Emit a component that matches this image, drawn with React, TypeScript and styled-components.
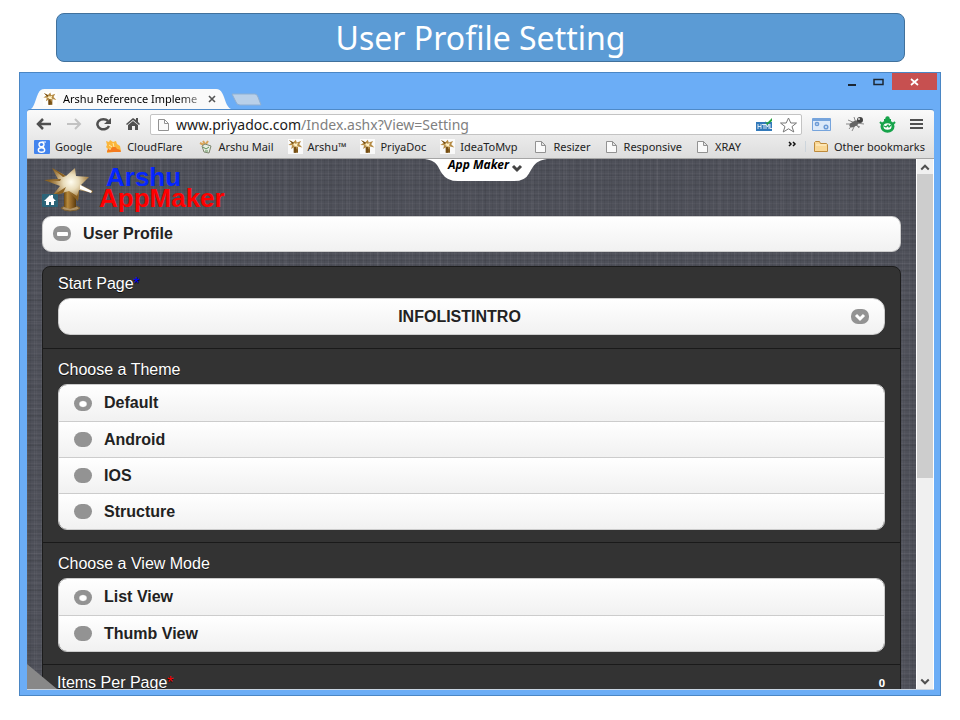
import React from "react";
import styled, { createGlobalStyle, css } from "styled-components";

const GlobalStyle = createGlobalStyle`
  *, *::before, *::after { box-sizing: border-box; }
  body { margin: 0; background: #fff; font-family: "Liberation Sans", Arial, sans-serif; }
  button, input, select { font: inherit; color: inherit; }
`;

const chromeFont = css`font-family: "Noto Sans", "Segoe UI", sans-serif;`;

const Slide = styled.main`
  display: flex;
  flex-direction: column;
  gap: 10px;
  height: 100vh;
  min-height: 480px;
  padding: 13px 19px 24px;
`;

const Banner = styled.h1`
  ${chromeFont}
  margin: 0 36px 0 37px;
  border: 1px solid #41719c;
  border-radius: 8px;
  background: #5b9bd5;
  color: #fff;
  font-size: 32px;
  line-height: 47px;
  font-weight: 400;
  text-align: center;
`;

const Browser = styled.section`
  display: flex;
  flex: 1;
  flex-direction: column;
  min-height: 0;
  padding: 0 6px 5px 7px;
  border: 1px solid #4a86c4;
  background: #6badf6;
`;

const TabStrip = styled.div`
  ${chromeFont}
  display: flex;
  align-items: flex-end;
  height: 36px;
  flex: none;
`;

const Tab = styled.div`
  position: relative;
  display: flex;
  align-items: center;
  gap: 6px;
  width: 200px;
  height: 20px;
  margin-left: 4px;
  padding: 0 15px 0 12px;
  font-size: 11px;
  line-height: 20px;
`;

const TabShape = styled.svg`
  position: absolute;
  inset: 0;
  width: 100%;
  height: 100%;
`;

const TabTitle = styled.span`
  position: relative;
  flex: 1;
  white-space: nowrap;
  mask-image: linear-gradient(90deg, #000 84%, rgba(0, 0, 0, .3));
`;

const IconButton = styled.button`
  position: relative;
  display: flex;
  align-items: center;
  justify-content: center;
  padding: 0;
  border: 0;
  background: none;
`;

const NewTab = styled(IconButton)`
  height: 20px;
  align-items: flex-start;
  padding-top: 4px;
`;

const WindowControls = styled.div`
  display: flex;
  align-self: flex-start;
  margin-left: auto;
  margin-right: -3px;
`;

const WindowButton = styled(IconButton)<{ $close?: boolean }>`
  width: ${(p) => (p.$close ? 45 : 27)}px;
  height: 17px;
  background: ${(p) => (p.$close ? "#c75050" : "none")};
`;

const Chrome = styled.div`
  ${chromeFont}
  flex: none;
  padding-top: 1px;
  border-top: 1px solid #4f8ac8;
  border-bottom: 1px solid #a5a5a5;
  border-radius: 3px 3px 0 0;
  background: linear-gradient(#fafafa, #dddddd);
`;

const Toolbar = styled.div`
  display: flex;
  align-items: center;
  height: 26px;
  padding: 0 11px 0 8px;
`;

const NavButtons = styled.nav`
  display: flex;
  gap: 12px;
  margin-right: 9px;
`;

const AddressBar = styled.form`
  display: flex;
  flex: 1;
  align-items: center;
  gap: 6px;
  height: 21px;
  margin-top: 1px;
  padding: 0 3px 0 6px;
  border: 1px solid #c3c3c3;
  border-radius: 2px;
  background: #fff;
`;

const AddressField = styled.label`
  position: relative;
  display: block;
  flex: 1;
  font-size: 14px;
  line-height: 19px;
`;

const AddressInput = styled.input`
  display: block;
  width: 100%;
  height: 19px;
  padding: 0;
  border: 0;
  outline: 0;
  background: none;
  color: transparent;
  caret-color: #222;
`;

const AddressText = styled.span`
  position: absolute;
  inset: 0;
  pointer-events: none;
  color: #808080;
  white-space: nowrap;
  b { color: #1b1b1b; font-weight: 400; }
`;

const Extensions = styled.div`
  display: flex;
  align-items: center;
  gap: 14px;
  margin-left: 10px;
`;

const Bookmarks = styled.nav`
  display: flex;
  align-items: center;
  height: 21px;
  padding: 0 9px 2px 7px;
`;

const Bookmark = styled.a<{ $space?: number; $inner?: number }>`
  display: flex;
  align-items: center;
  gap: ${(p) => p.$inner ?? 5}px;
  margin-right: ${(p) => p.$space ?? 14}px;
  color: #222;
  font-size: 11px;
  line-height: 18px;
  text-decoration: none;
  white-space: nowrap;
`;

const More = styled.button`
  display: flex;
  padding: 0 8px 4px 0;
  margin-left: auto;
  border: 0;
  border-right: 1px solid #cdd5dc;
  margin-right: 7px;
  background: none;
`;

const Viewport = styled.div`
  display: flex;
  flex: 1;
  min-height: 0;
  border-bottom: 1px solid #c9d5e2;
`;

const Page = styled.div`
  position: relative;
  flex: 1;
  overflow: hidden;
  padding: 6px 15px 0;
  background-color: #4e5059;
  background-image:
    repeating-linear-gradient(90deg, rgba(255,255,255,.04) 0 1px, transparent 1px 3px, rgba(0,0,0,.05) 3px 4px, transparent 4px 7px),
    repeating-linear-gradient(0deg, rgba(255,255,255,.03) 0 1px, transparent 1px 3px, rgba(0,0,0,.06) 3px 4px, transparent 4px 5px),
    repeating-linear-gradient(90deg, transparent 0 9px, rgba(255,255,255,.03) 9px 11px, transparent 11px 23px, rgba(0,0,0,.04) 23px 25px, transparent 25px 31px),
    repeating-linear-gradient(0deg, transparent 0 11px, rgba(0,0,0,.05) 11px 13px, transparent 13px 19px, rgba(255,255,255,.03) 19px 20px, transparent 20px 29px);
`;

const Brand = styled.header`
  display: flex;
  height: 51px;
`;

const LogoLink = styled.a`
  display: block;
  height: 50px;
`;

const BrandName = styled.div`
  display: flex;
  flex-direction: column;
  margin-left: 5px;
  color: #f00;
  font-size: 26px;
  line-height: 21px;
  font-weight: 700;
  padding-top: 2px;
`;

const BrandTop = styled.span`
  padding-left: 7px;
  color: #0526ff;
`;

const MenuTab = styled.button`
  ${chromeFont}
  position: absolute;
  top: 0;
  left: 50%;
  width: 122px;
  height: 23px;
  margin-left: -47px;
  padding: 0;
  border: 0;
  background: none;
  color: #000;
`;

const MenuFace = styled.span`
  position: relative;
  display: flex;
  justify-content: center;
  gap: 2px;
  height: 23px;
  font-size: 12px;
  line-height: 12px;
  font-style: italic;
  font-weight: 700;
`;

const whiteFace = css`
  border: 1px solid #ccc;
  background: linear-gradient(#fff, #f1f1f1);
  color: #222;
  font-size: 16px;
  font-weight: 700;
`;

const CollapseHeader = styled.button`
  ${whiteFace}
  display: flex;
  align-items: center;
  gap: 12px;
  width: 100%;
  height: 36px;
  padding: 0 10px 1px;
  border-radius: 9px;
`;

const Panel = styled.div`
  margin-top: 14px;
  border: 1px solid #1c1c1c;
  border-radius: 8px 8px 0 0;
  background: #333;
  color: #fff;
`;

const Field = styled.div`
  padding: 6px 15px 13px;
  border-bottom: 1px solid #1a1a1a;
`;

const Options = styled.fieldset`
  min-width: 0;
  margin: 0;
  padding: 10px 15px 12px;
  border: 0;
  border-bottom: 1px solid #1a1a1a;
`;

const labelText = css`
  display: block;
  padding: 0;
  font-size: 16px;
  line-height: 21px;
  text-shadow: 0 1px 0 #111;
`;

const FieldLabel = styled.label`${labelText}`;
const Legend = styled.legend`
  ${labelText}
  float: left;
  width: 100%;
  margin-bottom: 4px;
`;

const Required = styled.span<{ $blue?: boolean }>`
  color: ${(p) => (p.$blue ? "#00f" : "#f00")};
`;

const SelectWrap = styled.div`
  position: relative;
  margin-top: 4px;
`;

const Select = styled.select`
  ${whiteFace}
  appearance: none;
  display: block;
  width: 100%;
  height: 37px;
  padding: 0 48px 1px 24px;
  border-radius: 12px;
  text-align: center;
  text-align-last: center;
`;

const SelectIcon = styled.span`
  position: absolute;
  top: 11px;
  right: 16px;
  display: flex;
  pointer-events: none;
`;

const RadioGroup = styled.div`
  clear: both;
  overflow: hidden;
  border: 1px solid #ccc;
  border-radius: 9px;
`;

const RadioRow = styled.label`
  display: flex;
  align-items: center;
  gap: 12px;
  height: 36px;
  padding-left: 15px;
  background: linear-gradient(#fff, #f1f1f1);
  color: #222;
  font-size: 16px;
  font-weight: 700;
  & + & { border-top: 1px solid #ccc; }
`;

const Radio = styled.input`
  appearance: none;
  width: 18px;
  height: 15px;
  margin: 0;
  border-radius: 8px;
  background: #939393;
  &:checked { background: radial-gradient(ellipse 5px 4px at 9px 8px, #fff 60%, #939393 90%); }
`;

const InlineField = styled.div`
  display: flex;
  justify-content: space-between;
  padding: 7px 15px 12px 14px;
`;

const Count = styled.output`
  ${chromeFont}
  font-size: 11px;
  line-height: 21px;
  font-weight: 700;
`;

const Corner = styled.svg`
  position: absolute;
  left: 0;
  bottom: 0;
  width: 30px;
  height: 25px;
`;

const Scrollbar = styled.div`
  display: flex;
  flex-direction: column;
  justify-content: space-between;
  width: 18px;
  border: solid #fff;
  border-width: 0 1px;
  background: #f0f0f0;
`;

const ScrollButton = styled(IconButton)`
  height: 15px;
  width: 100%;
`;

const Thumb = styled.div`
  flex: 0 1 304px;
  margin-bottom: auto;
  background: #cdcdcd;
`;

function StarMark({ size = 15 }: { size?: number }) {
  return (
    <svg width={size} height={size} viewBox="0 0 48 48" aria-hidden="true">
      <path d="M0 0h48v48H0z" fill="#fff" fillOpacity=".8" />
      <path d="M18 24h14v20H18z" fill="#80581a" />
      <path d="M3 3l14 7 8-8 3 9 14-5-6 11 10 10-14-3-2 10-9-9-11 7 3-12-12-1 11-7z" fill="#b58b45" />
      <path d="M18 12l6 3 8-2-3 7 4 5-8-1-5 3 1-6-8-2 6-2z" fill="#fff0c4" />
      <path d="M3 3l16 9-4 4zM20 25h5v19h-5z" fill="#704a12" />
    </svg>
  );
}

function Logo() {
  return (
    <svg width="52" height="50" viewBox="0 0 52 50" role="img" aria-label="Home">
      <defs>
        <linearGradient id="post" x1="0" x2="1">
          <stop offset="0" stopColor="#6b4710" /><stop offset=".3" stopColor="#b78a3c" />
          <stop offset=".6" stopColor="#94682a" /><stop offset="1" stopColor="#5b3b0b" />
        </linearGradient>
        <radialGradient id="glow" cx="29" cy="17" r="22" gradientUnits="userSpaceOnUse">
          <stop offset="0" stopColor="#fffdf0" /><stop offset=".35" stopColor="#e9dcba" />
          <stop offset=".7" stopColor="#b1905a" /><stop offset="1" stopColor="#8a6324" />
        </radialGradient>
      </defs>
      <path d="M19 43l4-2h11l4 2-3 2-7 1-6-1z" fill="#b09468" stroke="#7b5c2a" />
      <path d="M22 24h12v18l-6 2-6-2z" fill="url(#post)" />
      <path d="M10 3l14 8 9-8 1 8 13 1-8 8 12 6-1 2-13-3-1 11-9-10-17 5 8-10-16-6 14-1z" fill="url(#glow)" />
      <path d="M10 3l14 8-3 1zM4 15l15-1-1 2zM27 26l9 10 1-11-2 6zM10 31l14-9-3 6z" fill="#8a6020" />
      <path d="M38 20l12 6-1 2-11-4z" fill="#fff" />
      <rect y="29" width="16" height="13" rx="1" fill="#2b6478" />
      <path d="M2 36l6-6 1 1V30h2v3l3 3h-2v4H9v-3H7v3H4v-4z" fill="#fff" />
    </svg>
  );
}

function PageIcon() {
  return (
    <svg width="13" height="14" viewBox="0 0 13 14" aria-hidden="true">
      <path d="M1.500 1.500h6l4 4v7h-10zM7.500 1.500v4h4" fill="#fafafa" stroke="#929292" />
    </svg>
  );
}

function GoogleIcon() {
  return (
    <svg width="16" height="14" viewBox="0 0 16 14" aria-hidden="true">
      <rect width="16" height="14" rx="1" fill="#4384ee" />
      <ellipse cx="7.500" cy="4.500" rx="2.500" ry="2.300" fill="none" stroke="#fff" strokeWidth="1.400" />
      <ellipse cx="7.500" cy="10" rx="3.200" ry="2.200" fill="none" stroke="#fff" strokeWidth="1.400" />
      <path d="M8 2h4M8 6l2 2" stroke="#fff" strokeWidth="1.200" />
    </svg>
  );
}

function CloudIcon() {
  return (
    <svg width="15" height="13" viewBox="0 0 15 13" aria-hidden="true">
      <path d="M0 1l3 1 1-2 3 2 3-1 1 3 3 2 1 5-14 2 1-4-2-2 1-2z" fill="#fbb63b" />
      <path d="M1 12c0-3 2-4 4-3 1-3 5-3 6 0 2 0 4 1 4 3z" fill="#f47b20" />
      <path d="M3 5l3 2M7 3l1 4M3 9h2" stroke="#ffe9a6" />
    </svg>
  );
}

function MailIcon() {
  return (
    <svg width="13" height="14" viewBox="0 0 13 14" aria-hidden="true">
      <path d="M1 3l4 2M4 1l2 3M9 1L7 4" stroke="#d8a458" strokeWidth="2" />
      <path d="M3 6l3-2 6 2-2 7-5-1z" fill="#e8eee2" stroke="#7d866f" />
      <path d="M4 7l3 2 3-2M6 11h3" stroke="#5c8f5a" fill="none" />
    </svg>
  );
}

function Chevron({ up }: { up?: boolean }) {
  return (
    <svg width="10" height="10" viewBox="0 0 8 8" aria-hidden="true">
      <path d={up ? "M1 6l3-3 3 3" : "M1 2l3 3 3-3"} fill="none" stroke="#505050" strokeWidth="1.600" />
    </svg>
  );
}

type RadioSetProps = { legend: string; name: string; items: string[] };

function RadioSet({ legend, name, items }: RadioSetProps) {
  return (
    <Options>
      <Legend>{legend}</Legend>
      <RadioGroup>
        {items.map((item, i) => (
          <RadioRow key={item}>
            <Radio type="radio" name={name} value={item} defaultChecked={i === 0} />
            {item}
          </RadioRow>
        ))}
      </RadioGroup>
    </Options>
  );
}

const bookmarks: { label: string; icon: React.ReactNode; space?: number; inner?: number }[] = [
  { label: "Google", icon: <GoogleIcon /> },
  { label: "CloudFlare", icon: <CloudIcon />, space: 17, inner: 6 },
  { label: "Arshu Mail", icon: <MailIcon />, inner: 6 },
  { label: "Arshu™", icon: <StarMark /> },
  { label: "PriyaDoc", icon: <StarMark /> },
  { label: "IdeaToMvp", icon: <StarMark />, space: 17 },
  { label: "Resizer", icon: <PageIcon />, inner: 6 },
  { label: "Responsive", icon: <PageIcon />, inner: 6 },
  { label: "XRAY", icon: <PageIcon />, inner: 6 },
];

export default function App() {
  return (
    <Slide>
      <GlobalStyle />
      <Banner>User Profile Setting</Banner>
      <Browser>
        <TabStrip>
          <Tab>
            <TabShape viewBox="0 0 203 20" preserveAspectRatio="none" aria-hidden="true">
              <path d="M0 20c4-2 6-17 10-19q1-1 4-1h174q4 0 6 4c3 5 4 14 9 16z" fill="#fafafa" />
            </TabShape>
            <IconButton as="span"><StarMark size={14} /></IconButton>
            <TabTitle>Arshu Reference Impleme</TabTitle>
            <IconButton aria-label="Close tab">
              <svg width="8" height="8" viewBox="0 0 8 8"><path d="M1 1l6 6M7 1L1 7" stroke="#555" strokeWidth="1.600" /></svg>
            </IconButton>
          </Tab>
          <NewTab aria-label="New tab">
            <svg width="31" height="13" viewBox="0 0 31 13"><path d="M1 1h23q2 0 3 3l3 8H9q-3 0-4-3z" fill="#b9d0e9" stroke="#8fafd2" /></svg>
          </NewTab>
          <WindowControls>
            <WindowButton aria-label="Minimize"><svg width="10" height="10"><path d="M1 7h8v2H1z" fill="#1c2733" /></svg></WindowButton>
            <WindowButton aria-label="Maximize"><svg width="11" height="8"><path d="M1 1.500h9v5H1z" fill="none" stroke="#1c2733" strokeWidth="1.500" /></svg></WindowButton>
            <WindowButton $close aria-label="Close"><svg width="9" height="8"><path d="M1 1l7 6M8 1L1 7" stroke="#fff" strokeWidth="1.700" /></svg></WindowButton>
          </WindowControls>
        </TabStrip>
        <Chrome>
          <Toolbar>
            <NavButtons aria-label="Browser">
              <IconButton aria-label="Back"><svg width="18" height="14"><path d="M8 2L3 7l5 5M3 7h13" fill="none" stroke="#505050" strokeWidth="2.500" /></svg></IconButton>
              <IconButton aria-label="Forward"><svg width="18" height="14"><path d="M10 2l5 5-5 5M15 7H2" fill="none" stroke="#c2c2c2" strokeWidth="2" /></svg></IconButton>
              <IconButton aria-label="Reload"><svg width="18" height="14"><path d="M13 4A6 5 0 1 0 14 9" fill="none" stroke="#505050" strokeWidth="2.500" /><path d="M16 1v6H9z" fill="#505050" /></svg></IconButton>
              <IconButton aria-label="Home page"><svg width="16" height="14"><path d="M1 7l7-6 3 2V1h2v4l2 2-1 1-6-5-6 5zM3 8l5-4 5 4v5h-3V9H7v4H3z" fill="#505050" /></svg></IconButton>
            </NavButtons>
            <AddressBar onSubmit={(e) => e.preventDefault()}>
              <PageIcon />
              <AddressField>
                <AddressInput aria-label="Address" readOnly value="www.priyadoc.com/Index.ashx?View=Setting" />
                <AddressText aria-hidden="true"><b>www.priyadoc.com</b>/Index.ashx?View=Setting</AddressText>
              </AddressField>
              <IconButton type="button" aria-label="HTML">
                <svg width="17" height="13" viewBox="0 0 17 13"><path d="M0 4h16v9H0z" fill="#3279ba" /><path d="M2 6v5M5 6v5M2 8.500h3M6 6.500h4M8 6v5M10 11V6l1.500 3L13 6v5M14 6v4.500h2" fill="none" stroke="#fff" strokeWidth=".8" /><path d="M9 3l2 2 5-5v3l-5 4z" fill="#25a33c" /></svg>
              </IconButton>
              <IconButton type="button" aria-label="Bookmark this page">
                <svg width="19" height="16" viewBox="0 0 19 16"><path d="M9.500 1l2.300 5h5.700l-4.500 3.600 1.800 5.400-5.300-3.200L4.200 15 6 9.600 1.500 6h5.700z" fill="#fff" stroke="#777" /></svg>
              </IconButton>
            </AddressBar>
            <Extensions>
              <IconButton aria-label="Page tools">
                <svg width="19" height="13" viewBox="0 0 19 13"><path d="M.5.500h18v12H.5z" fill="#dce9f9" stroke="#76a4dc" /><path d="M1 1h17v2H1z" fill="#76a4dc" /><circle cx="5" cy="6" r="1.600" fill="none" stroke="#6c9bd6" strokeWidth="1.500" /><circle cx="14" cy="9" r="1.800" fill="none" stroke="#6c9bd6" strokeWidth="1.500" /></svg>
              </IconButton>
              <IconButton aria-label="Debugger">
                <svg width="20" height="16" viewBox="0 0 20 16"><path d="M1 8h6l8-5M4 13l4-5 7 3M3 4l7 3 4 5M9 1l2 6 8 1M7 15l3-6" fill="none" stroke="#888" /><ellipse cx="9" cy="8" rx="5" ry="2.500" fill="#666" transform="rotate(-28 9 8)" /><circle cx="15" cy="4" r="3" fill="#444" /><circle cx="14" cy="3" r="1" fill="#ddd" /></svg>
              </IconButton>
              <IconButton aria-label="Site monitor">
                <svg width="17" height="17" viewBox="0 0 17 17"><path d="M1 6l2 2M16 6l-2 2M5 4h7" stroke="#16a34a" strokeWidth="2" /><circle cx="8.500" cy="2.500" r="2.200" fill="#16a34a" /><ellipse cx="8.500" cy="10.500" rx="5.500" ry="4.700" fill="#fff" stroke="#16a34a" strokeWidth="3" /><path d="M5 10l2 1 2-2 1 2 2-2" fill="none" stroke="#16a34a" strokeWidth="1.300" /></svg>
              </IconButton>
              <IconButton aria-label="Menu"><svg width="13" height="12"><path d="M0 2h13M0 6h13M0 10h13" stroke="#505050" strokeWidth="2" /></svg></IconButton>
            </Extensions>
          </Toolbar>
          <Bookmarks aria-label="Bookmarks">
            {bookmarks.map((b) => (
              <Bookmark key={b.label} href="#" $space={b.space} $inner={b.inner}>{b.icon}{b.label}</Bookmark>
            ))}
            <More aria-label="More bookmarks"><svg width="9" height="7"><path d="M1 1l2 2-2 2M5 1l2 2-2 2" fill="none" stroke="#111" strokeWidth="1.500" /></svg></More>
            <Bookmark href="#" $space={0}>
              <svg width="16" height="13" viewBox="0 0 16 13" aria-hidden="true"><path d="M1.500 11.500v-9l1-1h4l1 2h6l1 1v7z" fill="#f9d795" stroke="#bd8a3c" /><path d="M3 5h10" stroke="#fff3d2" /></svg>
              Other bookmarks
            </Bookmark>
          </Bookmarks>
        </Chrome>
        <Viewport>
          <Page>
            <Brand>
              <LogoLink href="#"><Logo /></LogoLink>
              <BrandName><BrandTop>Arshu</BrandTop><span>AppMaker</span></BrandName>
            </Brand>
            <MenuTab>
              <TabShape viewBox="0 0 122 24" preserveAspectRatio="none" aria-hidden="true"><path d="M0 0c13 2 13 9 17 15q5 8 16 8h56q11 0 15-8c4-6 5-13 18-15z" fill="#fff" /></TabShape>
              <MenuFace>App Maker<svg width="12" height="18" aria-hidden="true"><path d="M2 7l4 4 4-4" fill="none" stroke="#444" strokeWidth="3" /></svg></MenuFace>
            </MenuTab>
            <CollapseHeader aria-expanded="true">
              <svg width="18" height="15" aria-hidden="true"><rect width="18" height="15" rx="7" fill="#939393" /><rect x="4" y="6" width="11" height="4" rx="1" fill="#fff" /></svg>
              User Profile
            </CollapseHeader>
            <Panel>
              <Field>
                <FieldLabel htmlFor="start-page">Start Page<Required $blue>*</Required></FieldLabel>
                <SelectWrap>
                  <Select id="start-page"><option>INFOLISTINTRO</option></Select>
                  <SelectIcon><svg width="18" height="15" aria-hidden="true"><rect width="18" height="15" rx="7" fill="#939393" /><path d="M5 6l4 4 4-4" fill="none" stroke="#fff" strokeWidth="3" /></svg></SelectIcon>
                </SelectWrap>
              </Field>
              <RadioSet legend="Choose a Theme" name="theme" items={["Default", "Android", "IOS", "Structure"]} />
              <RadioSet legend="Choose a View Mode" name="view" items={["List View", "Thumb View"]} />
              <InlineField>
                <FieldLabel as="span">Items Per Page<Required>*</Required></FieldLabel>
                <Count>0</Count>
              </InlineField>
            </Panel>
            <Corner viewBox="0 0 30 25" aria-hidden="true"><path d="M0 0l30 25H0z" fill="#888" /></Corner>
          </Page>
          <Scrollbar>
            <ScrollButton aria-label="Scroll up"><Chevron up /></ScrollButton>
            <Thumb />
            <ScrollButton aria-label="Scroll down"><Chevron /></ScrollButton>
          </Scrollbar>
        </Viewport>
      </Browser>
    </Slide>
  );
}
